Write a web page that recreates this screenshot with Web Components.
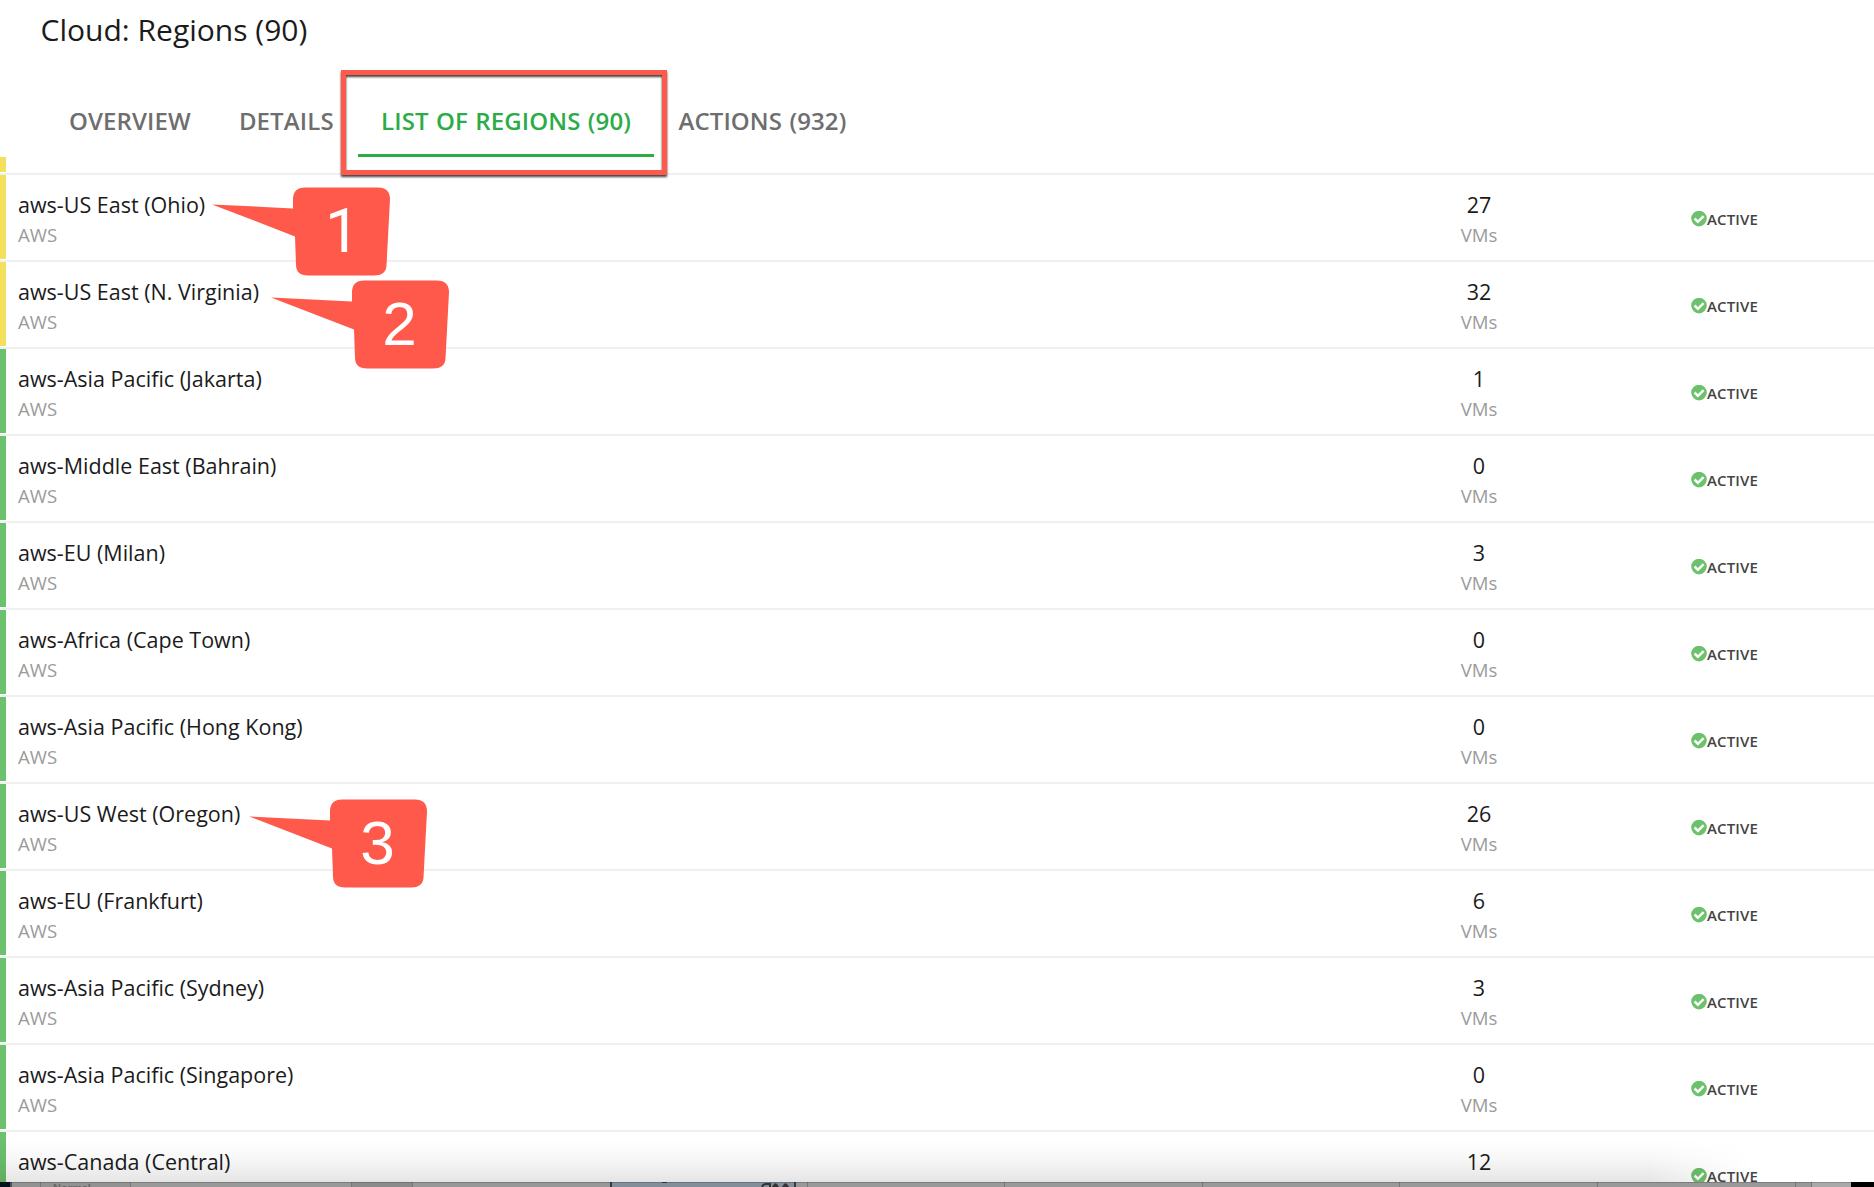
<!DOCTYPE html>
<html lang="en"><head><meta charset="utf-8"><title>Cloud: Regions</title>
<style>html,body{margin:0;height:100%;overflow:hidden;background:#fff}</style></head>
<body><regions-page></regions-page>
<script>
const define=(name,html,init)=>customElements.define(name,class extends HTMLElement{
 connectedCallback(){if(this.shadowRoot)return;const r=this.attachShadow({mode:'open'});r.innerHTML=typeof html==='function'?html(this):html;if(init)init(this,r)}
});
define('nav-tab',`<style>
:host{display:flex;align-items:center;box-sizing:border-box;height:70px;padding:0 24px;color:#6e6e6e;font-size:24px;font-weight:600;letter-spacing:.12px;word-spacing:1px;white-space:nowrap;border-bottom:3px solid transparent}
:host([active]){color:#2bac47;border-bottom-color:#2bac47;padding:0 23.400px}
</style><slot></slot>`);
define('status-badge',`<style>
:host{display:flex;align-items:center;color:#444;font-size:15px;font-weight:600;line-height:20px;letter-spacing:.15px}
svg{display:block;width:16px;height:16px;flex:none}
</style><svg viewBox="0 0 16 16"><circle cx="8" cy="7.600" r="7.8" fill="#6cc16c"/><path d="M3.6 7.5 6.9 10.8 12.6 5.1" fill="none" stroke="#fff" stroke-width="2.5"/></svg><span><slot></slot></span>`);
define('region-row',el=>`<style>
:host{display:flex;box-sizing:border-box;height:87px;border-bottom:2px solid #f0f0f0;flex:none}
.bar{width:6px;height:84px;background:#6cc16c;flex:none}
:host([warn]) .bar{background:#f5e05c}
.name{width:1294px;padding:15px 0 0 12px;box-sizing:border-box}
.count{width:358px;padding-top:15px;box-sizing:border-box;text-align:center}
.main{font-size:21.5px;line-height:30px;color:#1b1b1b;white-space:nowrap}
.sub{font-size:18.6px;line-height:30px;color:#9b9b9b}
status-badge{margin:0 0 0 33px;height:87px}
</style><div class="bar"></div>
<div class="name"><div class="main">${el.getAttribute('name')}</div><div class="sub">AWS</div></div>
<div class="count"><div class="main">${el.getAttribute('vms')}</div><div class="sub">VMs</div></div>
<status-badge>ACTIVE</status-badge>`);
define('focus-frame',`<style>:host{display:block;box-sizing:border-box;border:5px solid #ff594b;filter:drop-shadow(0 2px 1px rgba(0,0,0,.75))}</style>`);
define('step-callout',`<style>
:host{display:block;width:178px;height:90px}
svg{display:block;overflow:visible}
text{font:62px "Liberation Sans",Arial,sans-serif;fill:#fff;text-anchor:middle}
:host([number="1"]) text{font-family:Roboto,sans-serif}
</style><svg width="178" height="90"><g transform="translate(0 .4)"><path fill="#ff594b" d="M0 17 81 21V12Q81 0 93 0H166Q178 0 178 12L174.500 78Q174 88 162 88H96Q84 88 84 77L83 49Z"/><text y="65"></text></g></svg>`,(el,r)=>{
 const t=r.querySelector('text'),n=el.getAttribute('number');
 t.textContent=n;t.setAttribute('x',n==='1'?'130.500':'128.500');
});
define('bottom-shade',`<style>
:host{display:block;height:42px;background:linear-gradient(#0000,#00000008 45%,#0000001a);mask-image:linear-gradient(90deg,#000 88%,transparent 93.5%)}
</style>`);
define('backdrop-strip',`<style>
:host{display:block;height:5px;overflow:hidden}svg{display:block}
text{font:bold 11px "Liberation Sans",sans-serif;fill:#666}
</style><svg width="1874" height="5"></svg>`,(el,r)=>{
 const parts=[[0,10,'#07111d'],[10,2,'#4b555c'],[12,118,'#929292'],[130,221,'#999'],[351,61,'#8b8b8b'],[412,198,'#989898'],[610,2,'#333a42'],[612,182,'#828e9a'],[794,2,'#3c3c3c'],[796,1055,'#999'],[1811,40,'#aaa'],[1851,23,'#000']];
 const lines=[40,130,351,412,807,1004,1202,1399,1597,1795,1811];
 r.querySelector('svg').innerHTML=parts.map(p=>`<rect x="${p[0]}" width="${p[1]}" height="5" fill="${p[2]}"/>`).join('')
 +lines.map(x=>`<rect x="${x}" width="1" height="5" fill="#777"/>`).join('')
 +'<rect width="1851" height="1" fill="#000" opacity=".18"/><text x="53" y="10">Normal</text>'
 +'<g fill="#333"><path d="M662 0h5v1h-5zM772 5l2-3q1.500-1.500 3 0l2 3zM782 5l2-3q1.500-1.500 3 0l2 3z"/><path d="M762 5q1-3 4-3h4v3" fill="none" stroke="#333" stroke-width="2"/></g>';
});
const data=[['aws-US East (Ohio)',27],['aws-US East (N. Virginia)',32],['aws-Asia Pacific (Jakarta)',1],['aws-Middle East (Bahrain)',0],['aws-EU (Milan)',3],['aws-Africa (Cape Town)',0],['aws-Asia Pacific (Hong Kong)',0],['aws-US West (Oregon)',26],['aws-EU (Frankfurt)',6],['aws-Asia Pacific (Sydney)',3],['aws-Asia Pacific (Singapore)',0],['aws-Canada (Central)',12]];
define('regions-page',()=>`<style>
:host{display:flex;flex-direction:column;position:relative;width:1874px;height:1187px;overflow:hidden;font-family:"Open Sans",sans-serif;background:#fff}
h1{margin:0;padding:10px 0 0 40.6px;height:77px;font-size:30px;font-weight:400;line-height:40px;color:#1b1b1b}
h1,nav,.edge,main,backdrop-strip{flex:none;box-sizing:border-box}
nav{display:flex;height:80px;padding:10px 0 0 45px}
.edge{height:18px;border-bottom:2px solid #f0f0f0}.edge i{display:block;width:6px;height:15px;background:#f5e05c}
main{height:1007px;overflow:hidden}
focus-frame,step-callout,bottom-shade{position:absolute}
focus-frame{left:341px;top:70px;width:326px;height:105px}
bottom-shade{left:0;right:0;top:1140px}
</style><h1>Cloud: Regions (90)</h1>
<nav><nav-tab>OVERVIEW</nav-tab><nav-tab>DETAILS</nav-tab><nav-tab active>LIST OF REGIONS (90)</nav-tab><nav-tab>ACTIONS (932)</nav-tab></nav>
<div class="edge"><i></i></div>
<main>${data.map((d,i)=>`<region-row ${i<2?'warn':''} name="${d[0]}" vms="${d[1]}"></region-row>`).join('')}</main>
<backdrop-strip></backdrop-strip><bottom-shade></bottom-shade><focus-frame></focus-frame>
<step-callout number="1" style="left:211.500px;top:187px"></step-callout>
<step-callout number="2" style="left:271.300px;top:280px"></step-callout>
<step-callout number="3" style="left:249px;top:799px"></step-callout>`);
</script></body></html>
